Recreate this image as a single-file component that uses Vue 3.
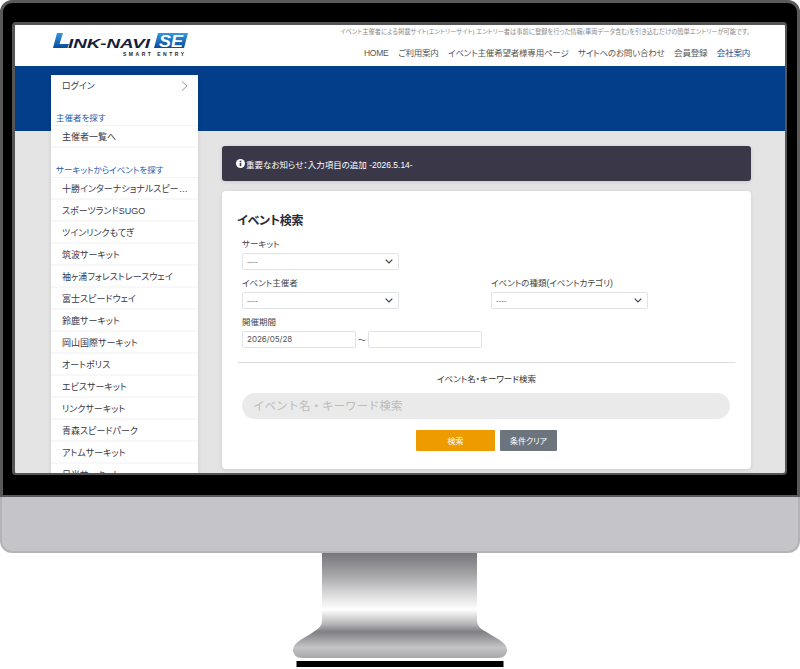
<template>
  <div class="page">
    <div class="monitor">
      <div class="bezel">
        <div class="screen">
          <header class="site-header">
            <svg class="logo" width="136" height="24" viewBox="0 0 136 24">
              <defs>
                <linearGradient id="logoBlue" x1="0" y1="0" x2="0" y2="1">
                  <stop offset="0" stop-color="#2f9be0" />
                  <stop offset="1" stop-color="#0a4a9c" />
                </linearGradient>
              </defs>
              <polygon points="4,0 10,0 6.5,11 16,11 14.5,15 0,15" fill="url(#logoBlue)" />
              <text x="15" y="14.5" class="logo-name" textLength="82" lengthAdjust="spacingAndGlyphs">INK-NAVI</text>
              <polygon points="105,0 135,0 131,15 101,15" fill="url(#logoBlue)" />
              <text x="106" y="13.5" class="logo-se" textLength="24" lengthAdjust="spacingAndGlyphs">SE</text>
              <text x="70" y="22.5" class="logo-sub" textLength="61" lengthAdjust="spacing">SMART ENTRY</text>
            </svg>
            <div class="header-right">
              <p class="lead">イベント主催者による掲載サイト(エントリーサイト) エントリー者は事前に登録を行った情報(車両データ含む)を引き込むだけの簡単エントリーが可能です。</p>
              <nav class="nav">
                <a v-for="item in navItems" :key="item" class="nav-item">{{ item }}</a>
                <a class="nav-item nav-current">会社案内</a>
              </nav>
            </div>
          </header>
          <div class="band"></div>
          <div class="body-row">
            <aside class="sidebar">
              <div class="side-item login">
                <span>ログイン</span>
                <svg width="7" height="10" viewBox="0 0 7 10"><path d="M1 0.5L6 5L1 9.5" fill="none" stroke="#999" stroke-width="1" /></svg>
              </div>
              <h3 class="side-title first">主催者を探す</h3>
              <div class="side-item">主催者一覧へ</div>
              <h3 class="side-title second">サーキットからイベントを探す</h3>
              <div v-for="c in circuits" :key="c" class="side-item">{{ c }}</div>
            </aside>
            <main class="content">
              <div class="notice">
                <svg width="9" height="9" viewBox="0 0 10 10">
                  <circle cx="5" cy="5" r="5" fill="#fff" />
                  <rect x="4.1" y="4.2" width="1.8" height="3.8" fill="#3a3848" />
                  <rect x="4.1" y="1.9" width="1.8" height="1.5" fill="#3a3848" />
                </svg>
                <span>重要なお知らせ：入力項目の追加 -2026.5.14-</span>
              </div>
              <section class="card">
                <h2 class="card-title">イベント検索</h2>
                <div class="field">
                  <label>サーキット</label>
                  <div class="select"><span>----</span><svg width="8" height="5" viewBox="0 0 8 5"><path d="M0.7 0.7L4 4L7.3 0.7" fill="none" stroke="#444" stroke-width="1.2" /></svg></div>
                </div>
                <div class="two-col">
                  <div class="field">
                    <label>イベント主催者</label>
                    <div class="select"><span>----</span><svg width="8" height="5" viewBox="0 0 8 5"><path d="M0.7 0.7L4 4L7.3 0.7" fill="none" stroke="#444" stroke-width="1.2" /></svg></div>
                  </div>
                  <div class="field">
                    <label>イベントの種類(イベントカテゴリ)</label>
                    <div class="select"><span>----</span><svg width="8" height="5" viewBox="0 0 8 5"><path d="M0.7 0.7L4 4L7.3 0.7" fill="none" stroke="#444" stroke-width="1.2" /></svg></div>
                  </div>
                </div>
                <div class="field">
                  <label>開催期間</label>
                  <div class="dates">
                    <div class="date-input">2026/05/28</div>
                    <span class="tilde">～</span>
                    <div class="date-input"></div>
                  </div>
                </div>
                <hr class="rule" />
                <p class="keyword-label">イベント名・キーワード検索</p>
                <div class="keyword-input">イベント名・キーワード検索</div>
                <div class="buttons">
                  <button class="btn btn-search">検索</button>
                  <button class="btn btn-clear">条件クリア</button>
                </div>
              </section>
            </main>
          </div>
        </div>
      </div>
      <div class="chin"></div>
    </div>
    <div class="stand">
      <svg width="216" height="116" viewBox="0 0 216 116">
        <defs>
          <linearGradient id="neck" x1="0" y1="0" x2="0" y2="1">
            <stop offset="0" stop-color="#77767b" />
            <stop offset="0.2" stop-color="#a3a3a5" />
            <stop offset="0.42" stop-color="#e2e2e3" />
            <stop offset="0.54" stop-color="#ffffff" />
            <stop offset="0.68" stop-color="#b4b4b6" />
            <stop offset="0.75" stop-color="#807f83" />
            <stop offset="0.9" stop-color="#c4c4c6" />
            <stop offset="1" stop-color="#a8a8aa" />
          </linearGradient>
        </defs>
        <path d="M30 0H185V68C185 74 191 77 196 80C206 86 215 90 215 97C215 102 211 105 206 105H10C5 105 1 102 1 97C1 90 10 86 20 80C24 77 30 74 30 68Z" fill="url(#neck)" />
        <rect x="4.5" y="108" width="207" height="6" fill="#000" />
      </svg>
    </div>
  </div>
</template>

<script setup>
const navItems = ['HOME', 'ご利用案内', 'イベント主催希望者様専用ページ', 'サイトへのお問い合わせ', '会員登録']

const circuits = [
  '十勝インターナショナルスピードウェイ',
  'スポーツランドSUGO',
  'ツインリンクもてぎ',
  '筑波サーキット',
  '袖ヶ浦フォレストレースウェイ',
  '富士スピードウェイ',
  '鈴鹿サーキット',
  '岡山国際サーキット',
  'オートポリス',
  'エビスサーキット',
  'リンクサーキット',
  '青森スピードパーク',
  'アトムサーキット',
  '日光サーキット'
]
</script>

<style>
html,
body {
  margin: 0;
  background: #fff;
}
</style>

<style scoped>
.page {
  width: 800px;
  height: 669px;
  overflow: hidden;
  font-family: "Liberation Sans", "Noto Sans CJK JP", sans-serif;
  font-feature-settings: "palt";
  color: #333;
}

.monitor {
  width: 800px;
}

.bezel {
  height: 497px;
  padding: 19px 10px 0 9px;
  background: #000;
  border: 3px solid #5a5a5a;
  border-bottom-width: 2px;
  border-radius: 12px 12px 0 0;
  box-sizing: border-box;
}

.screen {
  height: 453px;
  background: #e4e4e4;
  border: solid #555;
  border-width: 3px 2px 2px 3px;
  border-radius: 4px;
  overflow: hidden;
  box-sizing: border-box;
}

.chin {
  height: 56px;
  background: #c5c4c9;
  border: solid #b4b4b8;
  border-width: 0 2px 2px;
  border-radius: 0 0 12px 12px;
  box-sizing: border-box;
}

.stand {
  padding-left: 292px;
}

.stand svg {
  display: block;
}

.site-header {
  height: 41px;
  background: #fff;
  display: flex;
  justify-content: space-between;
  padding: 0 35px 0 38px;
}

.logo {
  margin-top: 8px;
  flex: none;
}

.logo-name {
  font-family: "Liberation Sans", sans-serif;
  font-weight: 700;
  font-style: italic;
  font-size: 12px;
  fill: #14203a;
}

.logo-se {
  font-family: "Liberation Sans", sans-serif;
  font-weight: 700;
  font-style: italic;
  font-size: 16px;
  fill: #fff;
}

.logo-sub {
  font-family: "Liberation Sans", sans-serif;
  font-weight: 700;
  font-size: 5px;
  fill: #222;
}

.header-right {
  text-align: right;
}

.lead {
  margin: 3px 0 0;
  font-size: 6.25px;
  line-height: 8px;
  color: #8a8a8a;
  white-space: nowrap;
}

.nav {
  display: flex;
  justify-content: flex-end;
  gap: 9.5px;
  margin-top: 10px;
  font-size: 8.5px;
  letter-spacing: -0.2px;
  line-height: 14px;
  color: #555;
}

.nav-current {
  color: #1c4e94;
}

.band {
  height: 65px;
  background: #033e8a;
}

.body-row {
  display: flex;
  align-items: flex-start;
  padding-left: 36px;
}

.sidebar {
  width: 147px;
  flex: none;
  margin-top: -56px;
  background: #fff;
  box-shadow: 0 0 4px rgba(0, 0, 0, 0.12);
}

.side-item {
  height: 22px;
  line-height: 20px;
  padding: 1px 8px 0 11px;
  font-size: 9px;
  color: #3a3848;
  border-bottom: 2px solid #f8f8f8;
  box-sizing: border-box;
  white-space: nowrap;
  overflow: hidden;
  text-overflow: ellipsis;
}

.login {
  display: flex;
  justify-content: space-between;
  align-items: center;
  border-bottom: 0;
  padding: 0 10px 0 11px;
}

.side-title {
  margin: 0;
  padding-left: 5px;
  font-size: 8.5px;
  font-weight: 400;
  line-height: 14px;
  color: #1f5aa8;
  border-bottom: 1px solid #f3f3f3;
}

.first {
  margin-top: 14px;
}

.second {
  margin-top: 15px;
}

.content {
  flex: 1;
  padding: 15px 34px 0 24px;
  min-width: 0;
}

.notice {
  height: 35px;
  display: flex;
  align-items: center;
  gap: 1px;
  padding-left: 14px;
  background: #3a3848;
  color: #fff;
  font-size: 8.5px;
  border-radius: 3px;
  box-shadow: 0 1px 4px rgba(0, 0, 0, 0.12);
}

.card {
  margin-top: 10px;
  height: 278px;
  padding: 22px 16px 0;
  box-sizing: border-box;
  background: #fff;
  border-radius: 4px;
  box-shadow: 0 1px 4px rgba(0, 0, 0, 0.1);
}

.card-title {
  margin: 0 0 6px -1px;
  font-size: 12px;
  letter-spacing: -0.2px;
  font-weight: 700;
  line-height: 17px;
  color: #2c2a3a;
}

.field {
  padding-left: 4px;
  margin-bottom: 5px;
}

.field label {
  display: block;
  font-size: 8.5px;
  line-height: 16px;
  margin-bottom: 1px;
  color: #444;
}

.select {
  width: 157px;
  height: 17px;
  padding: 0 5px 0 4px;
  display: flex;
  justify-content: space-between;
  align-items: center;
  border: 1px solid #e0e3e8;
  border-radius: 2px;
  font-size: 8px;
  color: #666;
  box-sizing: border-box;
}

.two-col {
  display: grid;
  grid-template-columns: 249px 1fr;
}

.dates {
  display: flex;
  align-items: center;
}

.date-input {
  width: 114px;
  height: 17px;
  line-height: 15px;
  padding-left: 4px;
  border: 1px solid #e0e3e8;
  border-radius: 2px;
  font-size: 8px;
  font-family: "Inter", sans-serif;
  color: #555;
  box-sizing: border-box;
}

.tilde {
  width: 12px;
  text-align: center;
  font-size: 8px;
  color: #555;
}

.rule {
  margin: 14px 0 0;
  border: 0;
  border-top: 1px solid #ddd;
}

.keyword-label {
  margin: 9px 0 0;
  text-align: center;
  font-size: 8.5px;
  line-height: 14px;
  color: #333;
}

.keyword-input {
  margin: 7px 5px 0 4px;
  height: 26px;
  line-height: 26px;
  padding-left: 11px;
  border-radius: 13px;
  background: #eaeaea;
  color: #bbb;
  font-size: 11.5px;
  font-feature-settings: normal;
}

.buttons {
  display: flex;
  justify-content: center;
  gap: 5px;
  margin-top: 11px;
}

.btn {
  height: 21px;
  border: 0;
  border-radius: 1px;
  color: #fff;
  font-family: inherit;
  font-feature-settings: inherit;
  font-size: 8px;
  padding: 0;
}

.btn-search {
  width: 79px;
  background: #ee9b00;
}

.btn-clear {
  width: 57px;
  background: #6c757d;
}
</style>
